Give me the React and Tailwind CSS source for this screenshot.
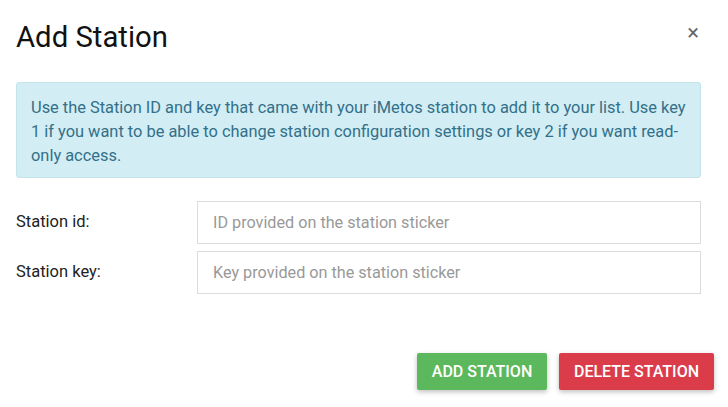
import React from 'react';

function App() {
  return (
    <div className="w-[728px] h-[407px] bg-white overflow-hidden font-['Roboto','Liberation_Sans',sans-serif]">
      {/* Header */}
      <div className="flex items-start justify-between pl-4 pr-[29px] pt-[20px]">
        <h2 className="text-[29.3px] leading-[34px] text-[#111] font-normal">Add Station</h2>
        <button className="text-[#666] text-[22px] leading-none mt-[2px]">×</button>
      </div>

      {/* Info */}
      <div className="ml-4 mr-[27px] mt-[28px] h-[96px] bg-[#d2edf3] border border-[#c2e4ea] rounded-[3px] pl-[14px] pr-[8px] pt-[13px] text-[16.4px] leading-[24px] text-[#33708a]">
        Use the Station ID and key that came with your iMetos station to add it to your list. Use key 1 if you want to be able to change station configuration settings or key 2 if you want read-only access.
      </div>

      {/* Form */}
      <div className="mt-[23px] ml-4 mr-[27px] flex flex-col gap-[7px]">
        <div className="flex items-center">
          <label className="w-[181px] text-[16.5px] text-[#222]">Station id:</label>
          <input
            className="flex-1 h-[43px] border border-[#dcdcdc] px-[15px] text-[16.2px] placeholder:text-[#999] outline-none"
            placeholder="ID provided on the station sticker"
          />
        </div>
        <div className="flex items-center">
          <label className="w-[181px] text-[16.5px] text-[#222]">Station key:</label>
          <input
            className="flex-1 h-[43px] border border-[#dcdcdc] px-[15px] text-[16.2px] placeholder:text-[#999] outline-none"
            placeholder="Key provided on the station sticker"
          />
        </div>
      </div>

      {/* Actions */}
      <div className="mt-[59px] flex justify-end gap-[12px] pr-[14px]">
        <button className="w-[130px] h-[37px] bg-[#5cb85c] text-white text-[16px] font-medium uppercase rounded-[2px] shadow-[0_2px_5px_rgba(0,0,0,0.25)]">
          Add Station
        </button>
        <button className="w-[155px] h-[37px] bg-[#da3c4a] text-white text-[16px] font-medium uppercase rounded-[2px] shadow-[0_2px_5px_rgba(0,0,0,0.25)]">
          Delete Station
        </button>
      </div>
    </div>
  );
}

export default App;
